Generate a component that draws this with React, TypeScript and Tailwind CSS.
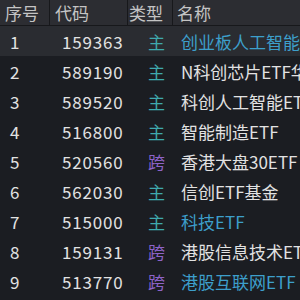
import React from 'react';

type Row = { no: number; code: string; type: '主' | '跨'; name: string; hl?: boolean };

const rows: Row[] = [
  { no: 1, code: '159363', type: '主', name: '创业板人工智能ETF', hl: true },
  { no: 2, code: '589190', type: '主', name: 'N科创芯片ETF华' },
  { no: 3, code: '589520', type: '主', name: '科创人工智能ETF' },
  { no: 4, code: '516800', type: '主', name: '智能制造ETF' },
  { no: 5, code: '520560', type: '跨', name: '香港大盘30ETF' },
  { no: 6, code: '562030', type: '主', name: '信创ETF基金' },
  { no: 7, code: '515000', type: '主', name: '科技ETF', hl: true },
  { no: 8, code: '159131', type: '跨', name: '港股信息技术ETF' },
  { no: 9, code: '513770', type: '跨', name: '港股互联网ETF', hl: true },
];

const font = { fontFamily: '"Microsoft YaHei", "Noto Sans CJK SC", sans-serif' };

const App = () => {
  return (
    <div className="w-[300px] h-[300px] overflow-hidden bg-[#1b1d22] text-[17px] leading-none" style={font}>
      {/* header */}
      <div className="flex h-[26px] bg-[#2c2d32] text-[#c4c4c4] border-b border-[#17181b]">
        <div className="w-[50px] shrink-0 pl-[5px] flex items-center border-r border-[#17181b]">序号</div>
        <div className="w-[78px] shrink-0 pl-[5px] flex items-center border-r border-[#17181b]">代码</div>
        <div className="w-[45px] shrink-0 pl-[1px] flex items-center border-r border-[#17181b]">类型</div>
        <div className="flex-1 pl-[4px] flex items-center whitespace-nowrap">名称</div>
      </div>
      {rows.map((r) => (
        <div
          key={r.no}
          className={
            'flex h-[30px] items-center whitespace-nowrap ' +
            (r.no === 1 ? 'bg-[#2a2c31]' : '')
          }
        >
          <div className="w-[50px] shrink-0 pl-[10px] text-[#e2e2e2]">{r.no}</div>
          <div className="w-[79px] shrink-0 pl-[12px] text-[#e2e2e2] tracking-[0.8px]">{r.code}</div>
          <div
            className={
              'w-[45px] shrink-0 pl-[19px] ' +
              (r.type === '主' ? 'text-[#3fa9ad]' : 'text-[#8d63c9]')
            }
          >
            {r.type}
          </div>
          <div className={'flex-1 pl-[7px] ' + (r.hl ? 'text-[#3d9fcb]' : 'text-[#e2e2e2]')}>
            {r.name}
          </div>
        </div>
      ))}
    </div>
  );
};

export default App;
